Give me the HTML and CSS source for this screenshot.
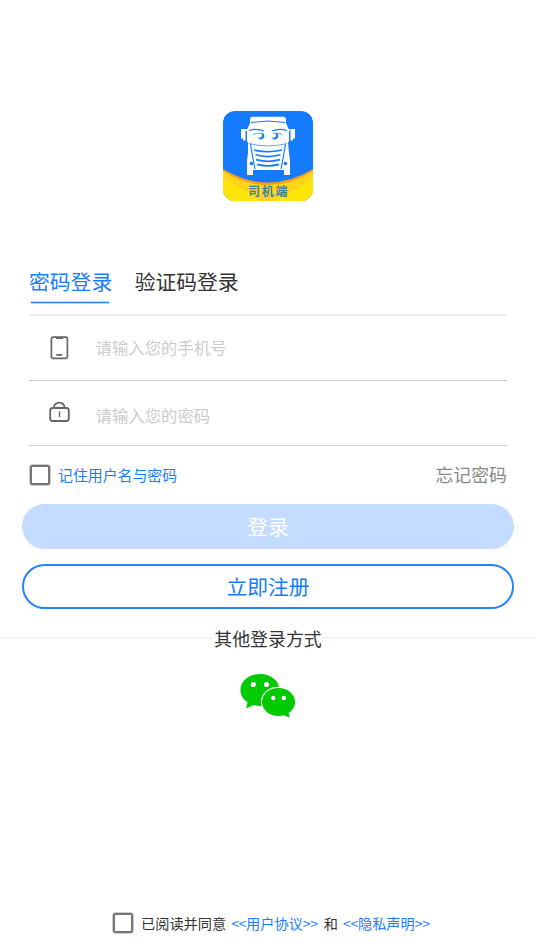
FILE: index.html
```html
<!DOCTYPE html>
<html lang="zh-CN">
<head>
<meta charset="utf-8">
<title>登录</title>
<link rel="stylesheet" href="styles.css">
</head>
<body>
<main class="page">
  <div class="logo">
    <svg width="90" height="90" viewBox="0 0 90 90">
      <defs>
        <clipPath id="tile"><rect width="90" height="90" rx="12"/></clipPath>
      </defs>
      <g clip-path="url(#tile)">
        <rect width="90" height="90" fill="#157bfd"/>
        <path d="M0 58Q45 85 90 58V90H0Z" fill="#f99a22"/>
        <path d="M0 60Q45 88 90 60V90H0Z" fill="#ffd51b"/>
        <path d="M0 68Q20 77 36 90H0ZM90 67Q76 77 52 90H90Z" fill="#ffe60a"/>
      </g>
      <g fill="#fff">
        <path d="M30 5.700h30q3 0 3 3v6q-18-3-36 0v-6q0-3 3-3Z"/>
        <path d="M26.500 13q18.500-4 37 0l2.500 6v10q0 3-3 3.500-18 4-36 0-3-.5-3-3.500V19Z"/>
        <path d="M18 18h4.500v11.500h-2.500v-2h-2ZM72 18h-4.500v11.500h2.500v-2h2ZM22 18h3v2h-3ZM65 18h3v2h-3Z"/>
        <path d="M25 31q20 6 40 0l1 11 1 8v14h-6v-5H30v5h-6V50l1-8Z"/>
      </g>
      <g fill="none" stroke="#157bfd">
        <path d="M28 11.500q17-3 34 0" stroke-width="1"/>
        <path d="M26 19.500q7-2.500 15 .5M49 20q8-3 15-.5" stroke-width="1.100"/>
        <path d="M30 23.500q4-2 9-1M50 22.500q6-1 9 1" stroke-width=".7"/>
        <path d="M26 32.500q19 5 38 0" stroke-width=".7"/>
        <path d="M27.500 33q2 13 4.500 25M62.500 33q-2 13-4.500 25" stroke-width="1.200"/>
        <path d="M31 39q14 3.500 28 0M32.500 43.800q12.500 3.500 25 0M33 48.600q12 3.500 24 0M34 53.400q11 3 22 0" stroke-width="1.700"/>
      </g>
      <path d="M38.500 21.500a3.500 3.500 0 1 1-3.800 5q3 1 4-1 .8-2-.2-4ZM52.500 21.500a3.500 3.500 0 1 1-3.800 5q3 1 4-1 .8-2-.2-4Z" fill="#157bfd"/>
      <circle cx="28.500" cy="52.500" r="1.800" fill="#157bfd"/>
      <circle cx="62.500" cy="52.500" r="1.800" fill="#157bfd"/>
      <text x="45.700" y="85" class="logo-text">司机端</text>
    </svg>
  </div>

  <nav class="tabs">
    <a class="tab tab-active">密码登录</a>
    <a class="tab">验证码登录</a>
  </nav>

  <form class="fields">
    <div class="field">
      <svg class="field-icon" width="22" height="24" viewBox="0 0 22 24" fill="none" stroke="#666" stroke-width="1.700">
        <rect x="3.400" y="1.200" width="16" height="21.200" rx="1.600"/>
        <path d="M8 2.200h7M8.300 18.800h6" stroke-width="1.800"/>
      </svg>
      <span class="placeholder">请输入您的手机号</span>
    </div>
    <div class="field field-password">
      <svg class="field-icon" width="22" height="24" viewBox="0 0 22 24" fill="none" stroke="#666" stroke-width="1.800">
        <rect x="2.200" y="8" width="18.600" height="13" rx="2.500"/>
        <path d="M5.800 8C6.500.8 16 .8 16.700 8"/>
        <path d="M11.500 11.500v5.500" stroke-width="1.400"/>
      </svg>
      <span class="placeholder">请输入您的密码</span>
    </div>
  </form>

  <div class="options">
    <label class="remember"><span class="checkbox"></span><span class="lift">记住用户名与密码</span></label>
    <a class="forgot lift">忘记密码</a>
  </div>

  <div class="actions">
    <div class="button button-login">登录</div>
    <div class="button button-register">立即注册</div>
  </div>

  <div class="divider"><span>其他登录方式</span></div>

  <div class="wechat">
    <svg width="56" height="45" viewBox="0 0 56 45">
      <path d="M20 1C9 1 .5 8 .5 17c0 5.200 2.700 9.300 7 12L6.300 35.500l7-3.500c2 .6 4.500 1 6.700 1 11 0 19.500-7 19.500-16S31 1 20 1Z" fill="#00ca00"/>
      <path d="M38.500 15c-9.200 0-16.500 6.200-16.500 14S29.300 43 38.500 43c1.800 0 4-.3 5.500-.8l5.800 2.600-1.200-4.800c3.900-2.500 6.400-6.300 6.400-11C55 21.200 47.700 15 38.500 15Z" fill="#00ca00" stroke="#fff" stroke-width="2.400" paint-order="stroke"/>
      <g fill="#fff"><circle cx="13.300" cy="11.500" r="2.600"/><circle cx="26.500" cy="11.500" r="2.600"/><circle cx="33.300" cy="25" r="2.200"/><circle cx="43.800" cy="25" r="2.200"/></g>
    </svg>
  </div>

  <footer class="agreement">
    <span class="checkbox"></span>
    <span class="agree-text">已阅读并同意</span>
    <a class="link"><span class="mark">&lt;&lt;</span>用户协议<span class="mark">&gt;&gt;</span></a>
    <span class="and">和</span>
    <a class="link"><span class="mark">&lt;&lt;</span>隐私声明<span class="mark">&gt;&gt;</span></a>
  </footer>
</main>
</body>
</html>
```

FILE: styles.css
```css
* { box-sizing: border-box; }

body {
  margin: 0;
  background: #fff;
  color: #333;
  font-family: "Noto Sans CJK SC", sans-serif;
}

.page {
  display: flex;
  flex-direction: column;
  width: 536px;
  height: 952px;
  padding-top: 111px;
  overflow: hidden;
}

.logo {
  display: flex;
  justify-content: center;
  height: 90px;
}

.logo-text {
  fill: #3b82a5;
  font-size: 12px;
  font-weight: 700;
  letter-spacing: 1.8px;
  text-anchor: middle;
}

.tabs {
  display: flex;
  gap: 22.5px;
  height: 115px;
  margin: 0 29px;
  padding-top: 61px;
  border-bottom: 2px solid #eee;
}

.tab {
  height: 42px;
  font-size: 20.8px;
  line-height: 38px;
}

.tab-active {
  color: #1a7cff;
}

.tab-active::after {
  content: "";
  display: block;
  width: 78px;
  height: 1px;
  margin: 2px 0 0 2px;
  background: #2583ff;
  box-shadow: 0 0 0 .3px #2583ff;
}

.fields { margin: 0 29px; }

.field {
  display: flex;
  align-items: center;
  gap: 25.500px;
  height: 65px;
  padding-left: 19px;
  border-bottom: 1px solid #ccc;
}

.field-password { border-color: #d4d4d4; }

.field-icon { margin-bottom: 1px; }

.field-password .field-icon { margin-bottom: 3px; }

.placeholder {
  padding-bottom: 2px;
  color: #ccc;
  font-size: 16.4px;
  line-height: 24px;
}

.field-password .placeholder { padding: 3px 0 0; }

.options {
  display: flex;
  align-items: center;
  justify-content: space-between;
  height: 58px;
  margin: 0 29px;
}

.remember {
  display: flex;
  align-items: center;
  gap: 8px;
  padding-left: 1px;
  color: #1a7cff;
  font-size: 14.9px;
}

.lift { padding-bottom: 2px; }

.checkbox {
  width: 20px;
  height: 20px;
  border: 2px solid #767676;
  border-radius: 2px;
  box-shadow: 0 0 0 .5px #999;
}

.forgot {
  color: #888;
  font-size: 17.9px;
}

.actions {
  display: flex;
  flex-direction: column;
  gap: 15px;
  margin: 0 22px;
}

.button {
  height: 45px;
  border-radius: 23px;
  font-size: 20.8px;
  line-height: 45px;
  text-align: center;
}

.button-login {
  background: #c4dcff;
  color: #fff;
}

.button-register {
  border: 2px solid #2583ff;
  color: #157bff;
  line-height: 40px;
}

.divider {
  display: flex;
  align-items: center;
  height: 30px;
  margin-top: 14px;
  font-size: 17.9px;
}

.divider::before,
.divider::after {
  content: "";
  flex: 1;
  height: 2px;
  background: #f5f5f5;
}

.wechat {
  display: flex;
  justify-content: center;
  margin-top: 20px;
}

.agreement {
  display: flex;
  align-items: center;
  height: 30px;
  margin-top: auto;
  margin-bottom: 14px;
  padding-left: 113px;
  font-size: 14.2px;
}

.agree-text { margin-left: 8px; }

.link {
  margin-left: 5px;
  color: #1a7cff;
}

.mark { letter-spacing: -.4px; }

.and { margin-left: 6px; }
```
